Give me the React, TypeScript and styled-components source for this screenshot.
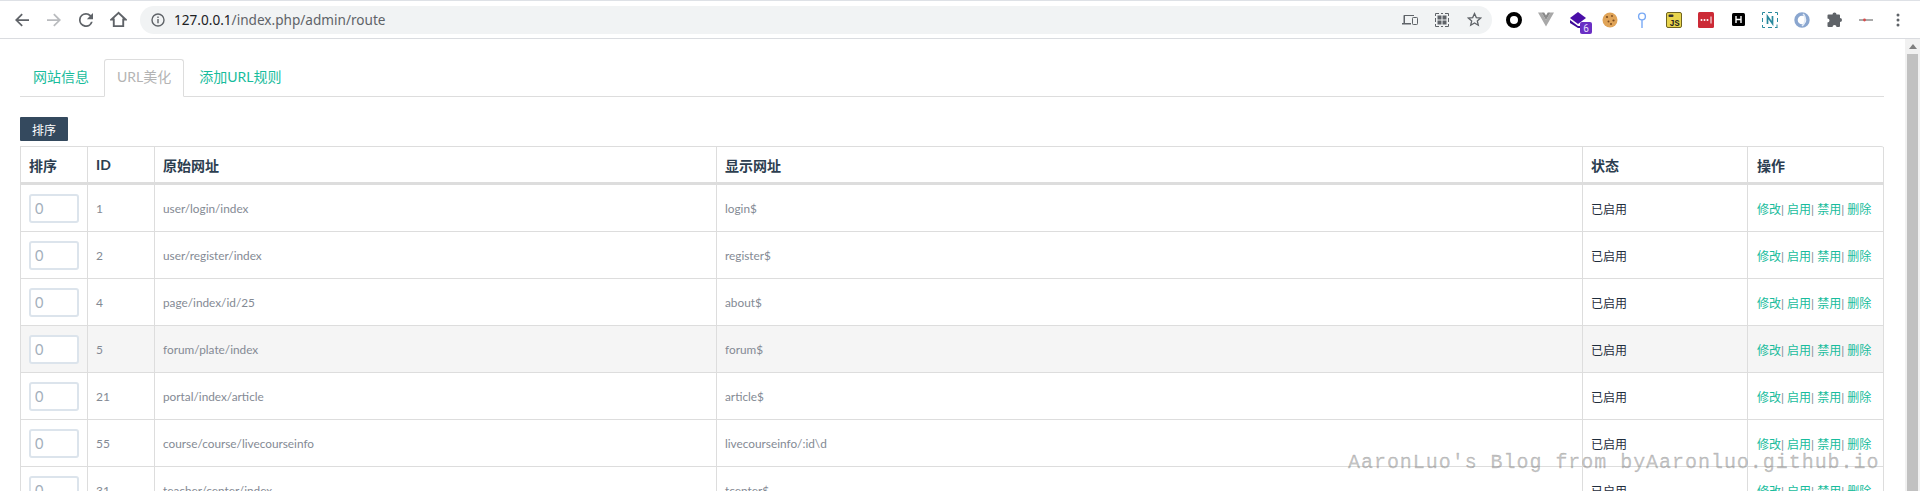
import styled, { createGlobalStyle } from 'styled-components';

const GlobalStyle = createGlobalStyle`
  html, body {
    margin: 0;
    padding: 0;
    height: 100%;
    overflow: hidden;
    background: #fff;
  }
  body {
    font-family: Lato, "Noto Sans CJK SC", sans-serif;
  }
`;

const Page = styled.div`
  position: relative;
  width: 1920px;
  height: 491px;
  overflow: hidden;
  display: flex;
  flex-direction: column;
`;

const TopStrip = styled.div`
  height: 1px;
  background: #dee1e6;
`;

const Toolbar = styled.div`
  height: 37px;
  display: flex;
  align-items: center;
  padding: 0 6px;
  border-bottom: 1px solid #dadce0;
  background: #fff;
`;

const ToolIcon = styled.div`
  width: 32px;
  height: 32px;
  flex: none;
  display: flex;
  align-items: center;
  justify-content: center;
`;

const Omnibox = styled.div`
  flex: none;
  width: 1352px;
  height: 28px;
  box-sizing: border-box;
  margin: 0 6px;
  border-radius: 14px;
  background: #f1f3f4;
  display: flex;
  align-items: center;
  padding: 0 2px;
`;

const InfoSlot = styled.div`
  width: 32px;
  flex: none;
  display: flex;
  justify-content: center;
`;

const Url = styled.div`
  flex: 1;
  font: 13.6px "Noto Sans", sans-serif;
  color: #5f6368;
  span {
    color: #202124;
  }
`;

const Body = styled.div`
  flex: 1;
  display: flex;
  min-height: 0;
`;

const Content = styled.div`
  flex: 1;
  min-width: 0;
  padding: 20px 21px 0 20px;
  overflow: hidden;
`;

const Tabs = styled.div`
  display: flex;
  height: 38px;
  border-bottom: 1px solid #dddddd;
  box-sizing: border-box;
`;

const Tab = styled.a<{ $active?: boolean }>`
  font-size: 14px;
  line-height: 34px;
  padding: 0 12px;
  height: 38px;
  box-sizing: border-box;
  color: ${p => (p.$active ? '#b4b4b4' : '#18bc9c')};
  background: ${p => (p.$active ? '#fff' : 'transparent')};
  border: 1px solid ${p => (p.$active ? '#dddddd' : 'transparent')};
  border-bottom-color: ${p => (p.$active ? '#fff' : 'transparent')};
  border-radius: 3px 3px 0 0;
  margin-right: 2px;
`;

const SortButton = styled.button`
  display: block;
  margin: 20px 0 5px;
  width: 48px;
  height: 24px;
  padding: 0;
  border: 0;
  border-radius: 1px;
  background: #34495e;
  color: #fff;
  font: 12px Lato, "Noto Sans CJK SC", sans-serif;
`;

const Table = styled.table`
  width: 1864px;
  table-layout: fixed;
  border-collapse: separate;
  border-spacing: 0;
  border-top: 1px solid #dddddd;
  border-left: 1px solid #dddddd;
  border-top-right-radius: 3px;
  font-size: 12px;
`;

const Th = styled.th`
  height: 38px;
  padding: 0 8px;
  box-sizing: border-box;
  text-align: left;
  font-size: 14px;
  font-weight: 700;
  color: #2c3e50;
  border-right: 1px solid #dddddd;
  border-bottom: 3px solid #dddddd;
  &:last-child {
    padding-left: 9px;
  }
`;

const Tr = styled.tr<{ $hover?: boolean }>`
  background: ${p => (p.$hover ? '#f5f5f5' : '#fff')};
`;

const Td = styled.td<{ $dark?: boolean; $url?: boolean }>`
  height: 47px;
  padding: 0 8px;
  box-sizing: border-box;
  font-size: ${p => (p.$url ? '11.8px' : '12px')};
  color: ${p => (p.$dark ? '#1f2d3d' : '#848a94')};
  border-right: 1px solid #dddddd;
  border-bottom: 1px solid #dddddd;
  &:last-child {
    padding-left: 9px;
  }
`;

const OrderInput = styled.input`
  display: block;
  width: 50px;
  height: 29px;
  box-sizing: border-box;
  padding: 0 4px;
  border: 2px solid #dce4ec;
  border-radius: 3px;
  background: #fff;
  color: #a3afbb;
  font: 14.5px Lato, sans-serif;
`;

const Action = styled.a`
  color: #18bc9c;
`;

const Watermark = styled.div`
  position: absolute;
  left: 1348px;
  top: 451px;
  white-space: pre;
  font: 20px "Liberation Mono", monospace;
  letter-spacing: 0.96px;
  color: rgba(100, 100, 100, 0.38);
  -webkit-text-stroke: 0.3px rgba(100, 100, 100, 0.38);
  pointer-events: none;
`;

const Scrollbar = styled.div`
  flex: none;
  width: 15px;
  background: #f1f1f1;
  display: flex;
  flex-direction: column;
`;

const ScrollArrow = styled.div`
  height: 15px;
  display: flex;
  align-items: center;
  justify-content: center;
`;

const ScrollThumb = styled.div`
  flex: 1;
  margin: 0 2px;
  background: #c1c1c1;
`;

const rows = [
  { id: 1, from: 'user/login/index', to: 'login$' },
  { id: 2, from: 'user/register/index', to: 'register$' },
  { id: 4, from: 'page/index/id/25', to: 'about$' },
  { id: 5, from: 'forum/plate/index', to: 'forum$', hover: true },
  { id: 21, from: 'portal/index/article', to: 'article$' },
  { id: 55, from: 'course/course/livecourseinfo', to: 'livecourseinfo/:id\\d' },
  { id: 31, from: 'teacher/center/index', to: 'tcenter$' },
];

const Back = ({ color = '#5f6368', flip = false }: { color?: string; flip?: boolean }) => (
  <svg width="14" height="14" viewBox="0 0 16 16" style={flip ? { transform: 'scaleX(-1)' } : undefined}>
    <path d="M16 7H3.800l5.100-5.100L7.500.5 0 8l7.500 7.500 1.400-1.400L3.800 9H16z" fill={color} />
  </svg>
);

const Reload = () => (
  <svg width="14" height="14" viewBox="0 0 16 16">
    <path d="M13.600 2.400A7.950 7.950 0 0 0 8 0a8 8 0 1 0 7.700 10h-2.100A6 6 0 1 1 8 2c1.660 0 3.100.68 4.200 1.800L9 7h7V0z" fill="#5f6368" />
  </svg>
);

const Home = () => (
  <svg width="17" height="17" viewBox="0 0 18 18">
    <path d="M9 2 1.500 9H4v7h10V9h2.500z" fill="none" stroke="#5f6368" strokeWidth="2" />
  </svg>
);

const Info = () => (
  <svg width="14" height="14" viewBox="0 0 14 14">
    <circle cx="7" cy="7" r="6" fill="none" stroke="#5f6368" strokeWidth="1.400" />
    <path d="M6.300 6h1.400v4.200H6.300zM6.300 3.600h1.400V5H6.300z" fill="#5f6368" />
  </svg>
);

const Devices = () => (
  <svg width="16" height="14" viewBox="0 0 16 14">
    <path d="M2 2h10v1H3v7H1.500V3c0-.5.200-1 .5-1zM0 10h9v1.500H0z" fill="#5f6368" />
    <rect x="10.500" y="4.500" width="5" height="7" rx=".8" fill="none" stroke="#5f6368" />
  </svg>
);

const Qr = () => (
  <svg width="14" height="14" viewBox="0 0 14 14">
    <rect x="2.500" y="2.500" width="4" height="4" fill="#5f6368" />
    <rect x="7.500" y="2.500" width="4" height="4" fill="#5f6368" />
    <rect x="2.500" y="7.500" width="4" height="4" fill="#5f6368" />
    <rect x="7.500" y="7.500" width="4" height="4" fill="#5f6368" />
    <path d="M.5 3V.5H4M10 .5h3.500V3M13.500 11v2.500H10M4 13.500H.5V11M.5 5v4M13.500 5v4M6 .5h2M6 13.500h2" fill="none" stroke="#5f6368" />
  </svg>
);

const Star = () => (
  <svg width="15" height="15" viewBox="0 0 15 15">
    <path d="m7.500 1.600 1.800 4 4.300.4-3.300 2.900 1 4.300-3.800-2.300-3.800 2.300 1-4.300L1.400 6l4.300-.4z" fill="none" stroke="#5f6368" strokeWidth="1.300" />
  </svg>
);

const RingExt = () => (
  <svg width="16" height="16" viewBox="0 0 16 16">
    <circle cx="8" cy="8" r="6" fill="none" stroke="#000" strokeWidth="4" />
  </svg>
);

const VueExt = () => (
  <svg width="16" height="15" viewBox="0 0 16 15">
    <path d="M0 .5h3.500L8 8l4.500-7.500H16L8 14.500z" fill="#a8a8a8" />
    <path d="M3.500.5h2.700L8 3.500 9.800.5h2.700L8 8z" fill="#8a8a8a" />
  </svg>
);

const StackExt = () => (
  <svg width="28" height="28" viewBox="0 0 28 28">
    <path d="M14 6l8 6-8 6-8-6z" fill="#4a0ea8" />
    <path d="M6 14l8 6 4 0 0 2-4 0-8-5z" fill="#3d0a96" />
    <rect x="16" y="16" width="12" height="12" rx="2" fill="#6a2fc4" />
    <text x="22" y="25.500" textAnchor="middle" fontSize="10" fill="#e8e0ff" fontFamily="Roboto, sans-serif">6</text>
  </svg>
);

const CookieExt = () => (
  <svg width="16" height="16" viewBox="0 0 16 16">
    <circle cx="8" cy="8" r="7.500" fill="#e0a458" />
    <circle cx="5" cy="5" r="1.100" fill="#7a4a1e" />
    <circle cx="10" cy="4" r=".9" fill="#7a4a1e" />
    <circle cx="11.500" cy="8.500" r="1.100" fill="#7a4a1e" />
    <circle cx="6.500" cy="9.500" r="1" fill="#7a4a1e" />
    <circle cx="9" cy="12" r="1" fill="#7a4a1e" />
  </svg>
);

const PinExt = () => (
  <svg width="10" height="16" viewBox="0 0 10 16">
    <circle cx="5" cy="4.500" r="3.400" fill="none" stroke="#78a9f5" strokeWidth="1.400" />
    <path d="M5 8v8" stroke="#78a9f5" strokeWidth="1.400" />
  </svg>
);

const JsExt = () => (
  <svg width="16" height="16" viewBox="0 0 16 16">
    <rect x=".5" y=".5" width="15" height="15" rx="1.500" fill="#e8d44d" stroke="#6f6420" />
    <rect x="2.500" y="2.500" width="5" height="2.500" rx="1" fill="#333" />
    <text x="8.500" y="13.500" textAnchor="middle" fontSize="8.500" fontWeight="700" fill="#222" fontFamily="'Liberation Mono', monospace">JS</text>
  </svg>
);

const LastPassExt = () => (
  <svg width="16" height="16" viewBox="0 0 16 16">
    <rect width="16" height="16" rx="1.500" fill="#cc2a36" />
    <circle cx="3.500" cy="8" r="1" fill="#fff" />
    <circle cx="6.500" cy="8" r="1" fill="#fff" />
    <circle cx="9.500" cy="8" r="1" fill="#fff" />
    <path d="M13 4.500v7" stroke="#fff" />
  </svg>
);

const HExt = () => (
  <svg width="13" height="13" viewBox="0 0 13 13">
    <rect width="13" height="13" rx="1.500" fill="#000" />
    <path d="M4 3v7M9 3v7M4 6.500h5" stroke="#fff" strokeWidth="1.400" fill="none" />
  </svg>
);

const NExt = () => (
  <svg width="16" height="16" viewBox="0 0 16 16">
    <path d="M.5 3V.5H3M6 .5h4M13 .5h2.500V3M15.500 6v4M.5 6v4M.5 13v2.500H3M6 15.500h4M13 15.500h2.500M15 12.500v3" fill="none" stroke="#2a8a9e" />
    <path d="M5.500 12V4.500l5 7V4" fill="none" stroke="#2a8a9e" strokeWidth="1.700" />
  </svg>
);

const GlobeExt = () => (
  <svg width="16" height="16" viewBox="0 0 16 16">
    <circle cx="8" cy="8" r="6" fill="none" stroke="#8aa6cf" strokeWidth="3.400" />
    <path d="M9 2c3 2 3 9-1 12" fill="none" stroke="#e4ecf7" strokeWidth="1.500" />
  </svg>
);

const Puzzle = () => (
  <svg width="15" height="15" viewBox="0 0 15 15">
    <path d="M5.500 2.500a2 2 0 0 1 4 0H12a1 1 0 0 1 1 1v2.500a2 2 0 0 1 0 4V14a1 1 0 0 1-1 1H9.500a2 2 0 0 0-4 0H1.500a1 1 0 0 1-1-1v-3.500a2 2 0 0 0 0-4V3.500a1 1 0 0 1 1-1z" fill="#5f6368" />
  </svg>
);

const DashExt = () => (
  <svg width="14" height="6" viewBox="0 0 14 6">
    <path d="M0 3h14" stroke="#555" />
    <circle cx="5.500" cy="3" r="1.400" fill="#d84a4a" />
  </svg>
);

const Dots = () => (
  <svg width="4" height="14" viewBox="0 0 4 14">
    <circle cx="2" cy="2" r="1.500" fill="#5f6368" />
    <circle cx="2" cy="7" r="1.500" fill="#5f6368" />
    <circle cx="2" cy="12" r="1.500" fill="#5f6368" />
  </svg>
);

const extensions = [
  <RingExt />, <VueExt />, <StackExt />, <CookieExt />, <PinExt />, <JsExt />, <LastPassExt />,
  <HExt />, <NExt />, <GlobeExt />, <Puzzle />, <DashExt />, <Dots />,
];

const App = () => (
  <Page>
    <GlobalStyle />
    <TopStrip />
    <Toolbar>
      <ToolIcon><Back /></ToolIcon>
      <ToolIcon><Back color="#b9bbbe" flip /></ToolIcon>
      <ToolIcon><Reload /></ToolIcon>
      <ToolIcon><Home /></ToolIcon>
      <Omnibox>
        <InfoSlot><Info /></InfoSlot>
        <Url><span>127.0.0.1</span>/index.php/admin/route</Url>
        <ToolIcon><Devices /></ToolIcon>
        <ToolIcon><Qr /></ToolIcon>
        <ToolIcon><Star /></ToolIcon>
      </Omnibox>
      {extensions.map((icon, i) => <ToolIcon key={i}>{icon}</ToolIcon>)}
    </Toolbar>
    <Body>
      <Content>
        <Tabs>
          <Tab>网站信息</Tab>
          <Tab $active>URL美化</Tab>
          <Tab>添加URL规则</Tab>
        </Tabs>
        <SortButton>排序</SortButton>
        <Table>
          <colgroup>
            <col style={{ width: 67 }} />
            <col style={{ width: 67 }} />
            <col style={{ width: 562 }} />
            <col style={{ width: 866 }} />
            <col style={{ width: 165 }} />
            <col />
          </colgroup>
          <thead>
            <tr>
              <Th>排序</Th>
              <Th>ID</Th>
              <Th>原始网址</Th>
              <Th>显示网址</Th>
              <Th>状态</Th>
              <Th>操作</Th>
            </tr>
          </thead>
          <tbody>
            {rows.map(row => (
              <Tr key={row.id} $hover={row.hover}>
                <Td><OrderInput defaultValue="0" /></Td>
                <Td>{row.id}</Td>
                <Td $url>{row.from}</Td>
                <Td $url>{row.to}</Td>
                <Td $dark>已启用</Td>
                <Td>
                  <Action>修改</Action>| <Action>启用</Action>| <Action>禁用</Action>| <Action>删除</Action>
                </Td>
              </Tr>
            ))}
          </tbody>
        </Table>
      </Content>
      <Scrollbar>
        <ScrollArrow>
          <svg width="8" height="5" viewBox="0 0 8 5"><path d="M4 0 8 5H0z" fill="#7f7f7f" /></svg>
        </ScrollArrow>
        <ScrollThumb />
      </Scrollbar>
    </Body>
    <Watermark>AaronLuo's Blog from byAaronluo.github.io</Watermark>
  </Page>
);

export default App;
